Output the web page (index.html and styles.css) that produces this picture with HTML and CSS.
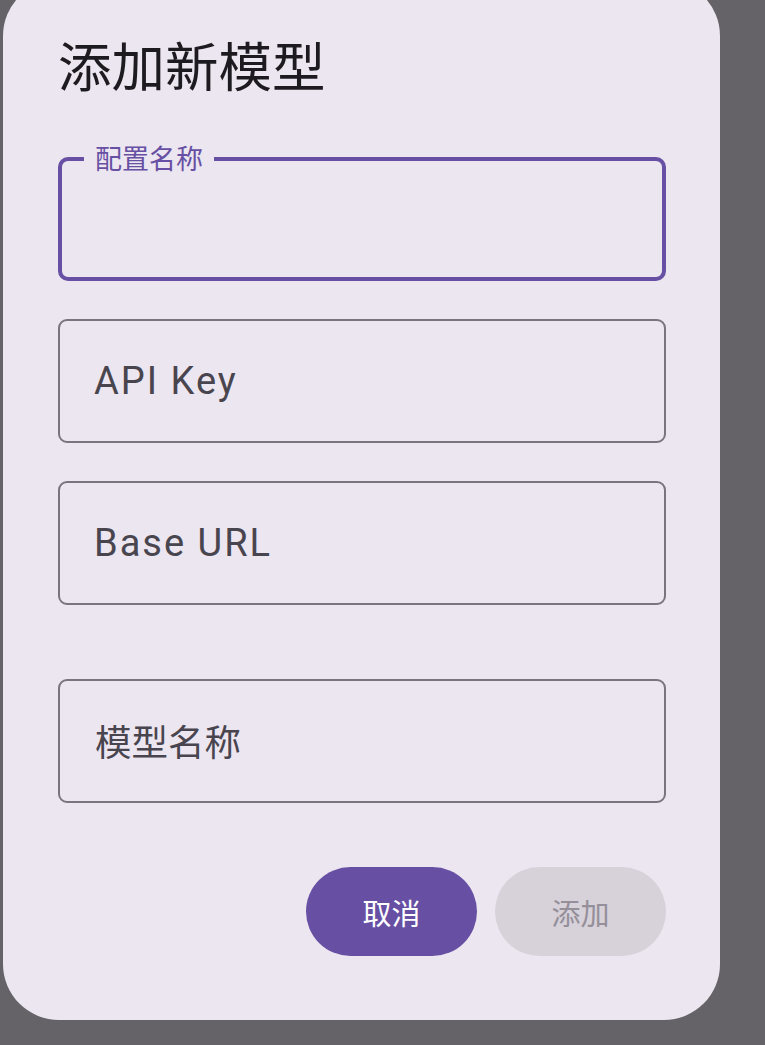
FILE: index.html
```html
<!DOCTYPE html>
<html lang="zh">
<head>
<meta charset="utf-8">
<title>添加新模型</title>
<link rel="stylesheet" href="styles.css">
</head>
<body>
<div class="dialog">
  <h1 class="title">添加新模型</h1>
  <div class="fields">
    <div class="field focused">
      <span class="float-label">配置名称</span>
    </div>
    <div class="field"><span class="placeholder">API Key</span></div>
    <div class="field"><span class="placeholder">Base URL</span></div>
    <div class="field spaced"><span class="placeholder cjk">模型名称</span></div>
  </div>
  <div class="actions">
    <button class="btn primary">取消</button>
    <button class="btn disabled">添加</button>
  </div>
</div>
</body>
</html>
```

FILE: styles.css
```css
html, body {
  margin: 0;
  padding: 0;
}
body {
  width: 765px;
  height: 1045px;
  overflow: hidden;
  background: #656367;
  font-family: Roboto, "Noto Sans CJK SC", sans-serif;
}
.dialog {
  box-sizing: border-box;
  width: 717px;
  height: 1040px;
  margin: -20px 0 0 3px;
  padding: 0 54px 0 55px;
  background: #ECE6F0;
  border-radius: 56px;
  display: flex;
  flex-direction: column;
}
.title {
  margin: 52px 0 0 0;
  font-family: "Noto Sans CJK SC", sans-serif;
  font-weight: 400;
  font-size: 53.5px;
  line-height: 64px;
  color: #1D1B20;
  letter-spacing: 0;
}
.fields {
  margin-top: 61px;
  display: flex;
  flex-direction: column;
  gap: 38px;
}
.field {
  position: relative;
  box-sizing: border-box;
  height: 124px;
  border: 2px solid #79747E;
  border-radius: 9px;
  display: flex;
  align-items: center;
  padding-left: 34px;
}
.field.focused {
  border: 4px solid #6750A4;
  border-radius: 10px;
}
.field.spaced {
  margin-top: 36px;
}
.float-label {
  position: absolute;
  left: 22px;
  top: -20px;
  padding: 0 11px;
  background: #ECE6F0;
  color: #6750A4;
  font-family: "Noto Sans CJK SC", sans-serif;
  font-size: 27px;
  line-height: 34px;
}
.placeholder {
  color: #49454F;
  font-size: 38px;
  letter-spacing: 2px;
  line-height: 44px;
  font-family: Roboto, "Noto Sans CJK SC", sans-serif;
}
.placeholder.cjk {
  font-family: "Noto Sans CJK SC", sans-serif;
  font-size: 36.5px;
  letter-spacing: 0;
  padding-left: 1px;
}
.actions {
  margin-top: 64px;
  display: flex;
  justify-content: flex-end;
  gap: 18px;
}
.btn {
  width: 171px;
  height: 89px;
  border: none;
  border-radius: 45px;
  font-family: "Noto Sans CJK SC", sans-serif;
  font-size: 29px;
  font-weight: 400;
  padding: 0;
}
.btn.primary {
  background: #6750A4;
  color: #FFFFFF;
}
.btn.disabled {
  background: #D7D1DA;
  color: #948F99;
}
```
